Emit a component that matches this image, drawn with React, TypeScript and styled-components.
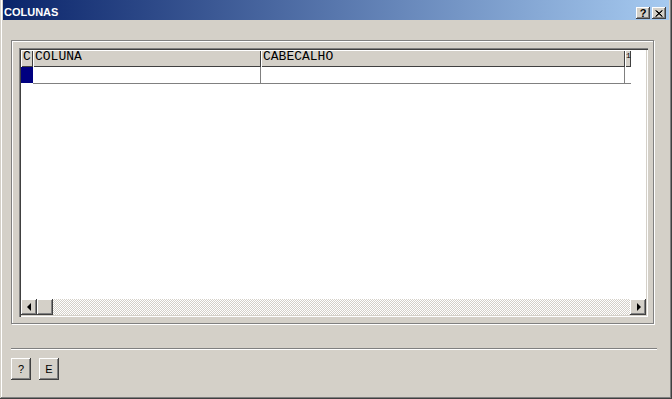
import React from 'react'
import styled, { createGlobalStyle } from 'styled-components'

const GlobalStyle = createGlobalStyle`
  html, body {
    margin: 0;
    padding: 0;
    background: #d4d0c8;
    overflow: hidden;
  }
  * {
    box-sizing: border-box;
  }
`

const raised = `
  background: #d4d0c8;
  box-shadow: inset -1px -1px 0 #404040, inset 1px 1px 0 #ffffff,
    inset -2px -2px 0 #808080, inset 2px 2px 0 #d4d0c8;
`

const Window = styled.div`
  width: 672px;
  height: 399px;
  display: flex;
  flex-direction: column;
  padding: 0 3px 3px 3px;
  background: #d4d0c8;
  box-shadow: inset -1px -1px 0 #404040, inset 1px 0 0 #d4d0c8,
    inset -2px -2px 0 #808080, inset 2px 0 0 #ffffff;
`

const TitleBar = styled.div`
  height: 20px;
  flex-shrink: 0;
  display: flex;
  align-items: flex-start;
  padding: 0 3px 0 1px;
  background: linear-gradient(to right, #0a246a, #a6caf0);
`

const Title = styled.span`
  flex: 1;
  padding-top: 6px;
  color: #ffffff;
  font-family: 'Liberation Sans', Arial, sans-serif;
  font-size: 11px;
  font-weight: bold;
  line-height: 13px;
`

const CaptionButtons = styled.div`
  display: flex;
  gap: 2px;
  margin-top: 7px;
`

const CaptionButton = styled.div`
  ${raised}
  width: 14px;
  height: 12px;
  display: flex;
  align-items: center;
  justify-content: center;
  color: #000;
  font-family: 'Liberation Sans', Arial, sans-serif;
  font-size: 11px;
  font-weight: bold;
  line-height: 11px;
`

const GroupBox = styled.div`
  width: 643px;
  height: 284px;
  margin: 20px 0 0 8px;
  padding: 7px 5px 6px 7px;
  border: 1px solid #808080;
  box-shadow: 1px 1px 0 #ffffff, inset 1px 1px 0 #ffffff;
`

const Grid = styled.div`
  width: 629px;
  height: 269px;
  padding: 2px;
  display: flex;
  flex-direction: column;
  background: #ffffff;
  box-shadow: inset 1px 1px 0 #808080, inset 2px 2px 0 #404040,
    inset -1px -1px 0 #ffffff, inset -2px -2px 0 #d4d0c8;
`

const HeaderRow = styled.div`
  display: flex;
  height: 17px;
  flex-shrink: 0;
`

const HeaderCell = styled.div<{ $w: number; $tiny?: boolean }>`
  width: ${p => p.$w}px;
  flex-shrink: 0;
  overflow: hidden;
  white-space: nowrap;
  padding-left: ${p => (p.$tiny ? 1 : 2)}px;
  background: #d4d0c8;
  box-shadow: inset 1px 1px 0 #ffffff, inset -1px -1px 0 #404040;
  color: #000;
  font-family: 'Liberation Mono', 'Courier New', monospace;
  font-size: ${p => (p.$tiny ? 8 : 13)}px;
  line-height: ${p => (p.$tiny ? 11 : 14)}px;
`

const DataRow = styled.div`
  display: flex;
  height: 17px;
  flex-shrink: 0;
`

const DataCell = styled.div<{ $w: number; $line?: boolean }>`
  width: ${p => p.$w}px;
  flex-shrink: 0;
  border-bottom: 1px solid #808080;
  border-right: ${p => (p.$line ? '1px solid #808080' : 'none')};
`

const Indicator = styled.div`
  width: 12px;
  height: 16px;
  flex-shrink: 0;
  background: #000080;
`

const GridBody = styled.div`
  flex: 1;
`

const ScrollBar = styled.div`
  display: flex;
  height: 16px;
  flex-shrink: 0;
`

const ScrollButton = styled.div`
  ${raised}
  width: 16px;
  height: 16px;
  flex-shrink: 0;
  display: flex;
  align-items: center;
  justify-content: center;
`

const Arrow = styled.span<{ $dir: 'left' | 'right' }>`
  width: 0;
  height: 0;
  border-top: 4px solid transparent;
  border-bottom: 4px solid transparent;
  ${p =>
    p.$dir === 'left'
      ? 'border-right: 4px solid #000; margin-right: 1px;'
      : 'border-left: 4px solid #000; margin-left: 1px;'}
`

const Track = styled.div`
  flex: 1;
  background: repeating-conic-gradient(#d4d0c8 0% 25%, #ffffff 0% 50%) 0 0 / 2px 2px;
`

const Separator = styled.div`
  width: 646px;
  height: 2px;
  margin: 24px 0 0 8px;
  border-top: 1px solid #808080;
  border-bottom: 1px solid #ffffff;
`

const ButtonBar = styled.div`
  display: flex;
  gap: 8px;
  margin: 8px 0 0 8px;
`

const Button = styled.div`
  ${raised}
  width: 20px;
  height: 22px;
  display: flex;
  align-items: center;
  justify-content: center;
  color: #000;
  font-family: 'Liberation Sans', Arial, sans-serif;
  font-size: 11px;
`

const columns = [
  { title: 'C', width: 12 },
  { title: 'COLUNA', width: 228 },
  { title: 'CABECALHO', width: 364 },
  { title: '1', width: 6, tiny: true },
]

const App = () => {
  return (
    <>
      <GlobalStyle />
      <Window>
        <TitleBar>
          <Title>COLUNAS</Title>
          <CaptionButtons>
            <CaptionButton>?</CaptionButton>
            <CaptionButton>
              <svg width="8" height="7" viewBox="0 0 8 7">
                <path d="M0.5 0.5 L7 6.5 M1.5 0.5 L7.5 6.5 M7 0.5 L0.5 6.5 M7.5 0.5 L1 6.5" stroke="#000" strokeWidth="1" />
              </svg>
            </CaptionButton>
          </CaptionButtons>
        </TitleBar>

        <GroupBox>
          <Grid>
            <HeaderRow>
              {columns.map(col => (
                <HeaderCell key={col.title} $w={col.width} $tiny={col.tiny}>
                  {col.title}
                </HeaderCell>
              ))}
            </HeaderRow>
            <DataRow>
              <Indicator />
              <DataCell $w={228} $line />
              <DataCell $w={364} $line />
              <DataCell $w={6} />
            </DataRow>
            <GridBody />
            <ScrollBar>
              <ScrollButton>
                <Arrow $dir="left" />
              </ScrollButton>
              <ScrollButton />
              <Track />
              <ScrollButton>
                <Arrow $dir="right" />
              </ScrollButton>
            </ScrollBar>
          </Grid>
        </GroupBox>

        <Separator />

        <ButtonBar>
          <Button>?</Button>
          <Button>E</Button>
        </ButtonBar>
      </Window>
    </>
  )
}

export default App
